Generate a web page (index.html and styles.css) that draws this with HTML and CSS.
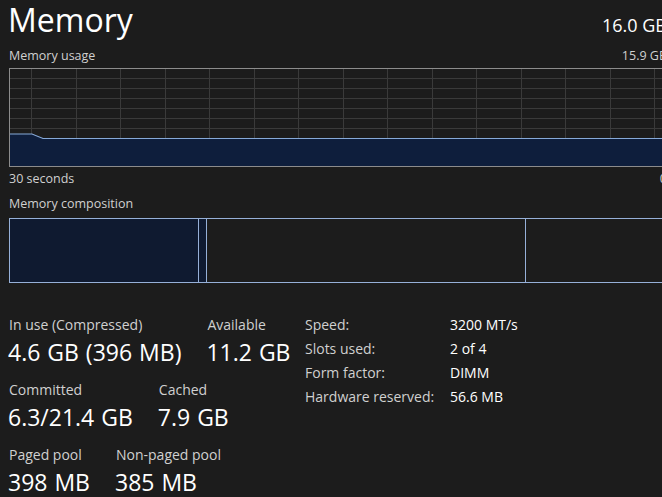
FILE: index.html
```html
<!DOCTYPE html>
<html lang="en">
<head>
  <meta charset="UTF-8">
  <title>Memory</title>
  <link rel="stylesheet" href="styles.css">
</head>
<body>
  <div class="perf-page">
    <div class="perf-header">
      <h1 class="perf-title">Memory</h1>
      <div class="perf-total">16.0 GB</div>
    </div>

    <div class="graph-caption">
      <span>Memory usage</span>
      <span>15.9 GB</span>
    </div>
    <div class="usage-graph">
      <svg width="656" height="97" viewBox="0 0 656 97">
        <g class="grid">
          <line x1="0" y1="9.5" x2="656" y2="9.5"/>
          <line x1="0" y1="19.5" x2="656" y2="19.5"/>
          <line x1="0" y1="29.5" x2="656" y2="29.5"/>
          <line x1="0" y1="39.5" x2="656" y2="39.5"/>
          <line x1="0" y1="49.5" x2="656" y2="49.5"/>
          <line x1="0" y1="59.5" x2="656" y2="59.5"/>
          <line x1="0" y1="69.5" x2="656" y2="69.5"/>
          <line x1="0" y1="79.5" x2="656" y2="79.5"/>
          <line x1="0" y1="89.5" x2="656" y2="89.5"/>
          <line x1="21.5" y1="0" x2="21.5" y2="97"/>
          <line x1="66.5" y1="0" x2="66.5" y2="97"/>
          <line x1="110.5" y1="0" x2="110.5" y2="97"/>
          <line x1="155.5" y1="0" x2="155.5" y2="97"/>
          <line x1="199.5" y1="0" x2="199.5" y2="97"/>
          <line x1="244.5" y1="0" x2="244.5" y2="97"/>
          <line x1="288.5" y1="0" x2="288.5" y2="97"/>
          <line x1="333.5" y1="0" x2="333.5" y2="97"/>
          <line x1="377.5" y1="0" x2="377.5" y2="97"/>
          <line x1="422.5" y1="0" x2="422.5" y2="97"/>
          <line x1="466.5" y1="0" x2="466.5" y2="97"/>
          <line x1="511.5" y1="0" x2="511.5" y2="97"/>
          <line x1="555.5" y1="0" x2="555.5" y2="97"/>
          <line x1="600.5" y1="0" x2="600.5" y2="97"/>
          <line x1="644.5" y1="0" x2="644.5" y2="97"/>
        </g>
        <path class="usage-fill" d="M0 65 L22 65 L33 69.5 L656 69.5 L656 97 L0 97 Z"/>
        <polyline class="usage-line" points="0,65 22,65 33,69.5 656,69.5"/>
      </svg>
    </div>
    <div class="graph-caption time-caption">
      <span>30 seconds</span>
      <span>0</span>
    </div>

    <div class="graph-caption composition-caption">
      <span>Memory composition</span>
    </div>
    <div class="composition-bar">
      <div class="segment in-use"></div>
      <div class="segment modified"></div>
      <div class="segment standby"></div>
      <div class="segment free"></div>
    </div>

    <div class="details">
      <div class="stats">
        <div class="stat-row">
          <div class="stat">
            <div class="stat-label">In use (Compressed)</div>
            <div class="stat-value">4.6 GB (396 MB)</div>
          </div>
          <div class="stat">
            <div class="stat-label">Available</div>
            <div class="stat-value">11.2 GB</div>
          </div>
        </div>
        <div class="stat-row">
          <div class="stat">
            <div class="stat-label">Committed</div>
            <div class="stat-value">6.3/21.4 GB</div>
          </div>
          <div class="stat">
            <div class="stat-label">Cached</div>
            <div class="stat-value">7.9 GB</div>
          </div>
        </div>
        <div class="stat-row">
          <div class="stat">
            <div class="stat-label">Paged pool</div>
            <div class="stat-value">398 MB</div>
          </div>
          <div class="stat">
            <div class="stat-label">Non-paged pool</div>
            <div class="stat-value">385 MB</div>
          </div>
        </div>
      </div>

      <div class="specs">
        <div class="spec-label">Speed:</div>
        <div class="spec-value">3200 MT/s</div>
        <div class="spec-label">Slots used:</div>
        <div class="spec-value">2 of 4</div>
        <div class="spec-label">Form factor:</div>
        <div class="spec-value">DIMM</div>
        <div class="spec-label">Hardware reserved:</div>
        <div class="spec-value">56.6 MB</div>
      </div>
    </div>
  </div>
</body>
</html>
```

FILE: styles.css
```css
/* dark performance page */
body {
  margin: 0;
  background: #1c1c1c;
  color: #ffffff;
  font-family: "Segoe UI", "Open Sans", sans-serif;
  overflow: hidden;
}

.perf-page {
  width: 658px;
  padding: 0 0 0 9px;
}

.perf-header {
  display: flex;
  justify-content: space-between;
  align-items: baseline;
  height: 47px;
}

.perf-title {
  margin: 0;
  font-size: 32px;
  font-weight: 400;
  line-height: 40px;
  margin-left: -1px;
}

.perf-total {
  font-size: 18px;
}

.graph-caption {
  display: flex;
  justify-content: space-between;
  font-size: 12.5px;
  color: #d0d0d0;
  line-height: 18px;
}

.usage-graph {
  margin-top: 3px;
  border: 1px solid #8c8c8c;
  height: 97px;
}

.usage-graph svg {
  display: block;
}

.grid line {
  stroke: #3a3a3a;
  stroke-width: 1;
}

.usage-fill {
  fill: #0e1e3c;
}

.usage-line {
  fill: none;
  stroke: #86a9d8;
  stroke-width: 1.2;
}

.time-caption {
  margin-top: 3px;
}

.composition-caption {
  margin-top: 7px;
}

.composition-bar {
  display: flex;
  height: 63px;
  margin-top: 5px;
  border: 1px solid #96b0d8;
}

.segment {
  border-right: 1px solid #96b0d8;
}

.in-use {
  width: 188px;
  background: #0f1a30;
}

.modified {
  width: 7px;
  background: #0f1a30;
}

.standby {
  width: 318px;
}

.free {
  flex: 1;
  border-right: none;
}

.details {
  display: flex;
  align-items: flex-start;
  margin-top: 32px;
}

.stats {
  width: 296px;
}

.stat-row {
  display: flex;
  gap: 26px;
  margin-bottom: 13px;
}

.stat-label {
  font-size: 14px;
  color: #d0d0d0;
  line-height: 20px;
}

.stat-value {
  font-size: 23px;
  line-height: 30px;
  word-spacing: 1px;
  margin-top: 2px;
  margin-left: -1px;
}

.specs {
  display: grid;
  grid-template-columns: 145px auto;
  align-content: start;
  row-gap: 4px;
  font-size: 14px;
  line-height: 20px;
}

.spec-label {
  color: #d0d0d0;
}
```
